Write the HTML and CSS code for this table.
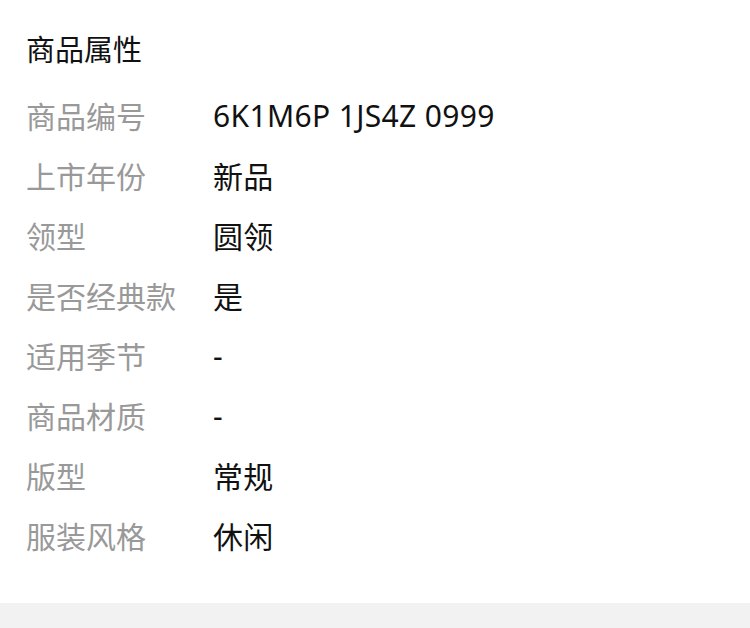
FILE: index.html
```html
<!DOCTYPE html>
<html lang="zh-CN">
<head>
    <meta charset="UTF-8">
    <meta name="viewport" content="width=device-width, initial-scale=1.0">
    <title>商品属性</title>
    <link rel="stylesheet" href="styles.css">
</head>
<body>
    <div class="attrs">
        <h2 class="attrs-title">商品属性</h2>
        <div class="attr-row"><span class="attr-label">商品编号</span><span class="attr-value">6K1M6P 1JS4Z 0999</span></div>
        <div class="attr-row"><span class="attr-label">上市年份</span><span class="attr-value">新品</span></div>
        <div class="attr-row"><span class="attr-label">领型</span><span class="attr-value">圆领</span></div>
        <div class="attr-row"><span class="attr-label">是否经典款</span><span class="attr-value">是</span></div>
        <div class="attr-row"><span class="attr-label">适用季节</span><span class="attr-value">-</span></div>
        <div class="attr-row"><span class="attr-label">商品材质</span><span class="attr-value">-</span></div>
        <div class="attr-row"><span class="attr-label">版型</span><span class="attr-value">常规</span></div>
        <div class="attr-row"><span class="attr-label">服装风格</span><span class="attr-value">休闲</span></div>
    </div>
    <div class="gap-band"></div>
</body>
</html>
```
FILE: styles.css
```css
body {
    margin: 0;
    background-color: #fff;
    font-family: "Noto Sans", "Noto Sans CJK SC", sans-serif;
}
.attrs { padding: 30px 26px 38px; }
.attrs-title {
    margin: 0 0 15px;
    font-size: 29px;
    font-weight: normal;
    line-height: 40px;
    color: #111;
}
.attr-row { display: flex; height: 60px; align-items: center; font-size: 30px; }
.attr-label { width: 187px; flex-shrink: 0; color: #999; }
.attr-value { color: #111; letter-spacing: 0.35px; }
.gap-band { height: 40px; background-color: #f2f2f2; }
```
